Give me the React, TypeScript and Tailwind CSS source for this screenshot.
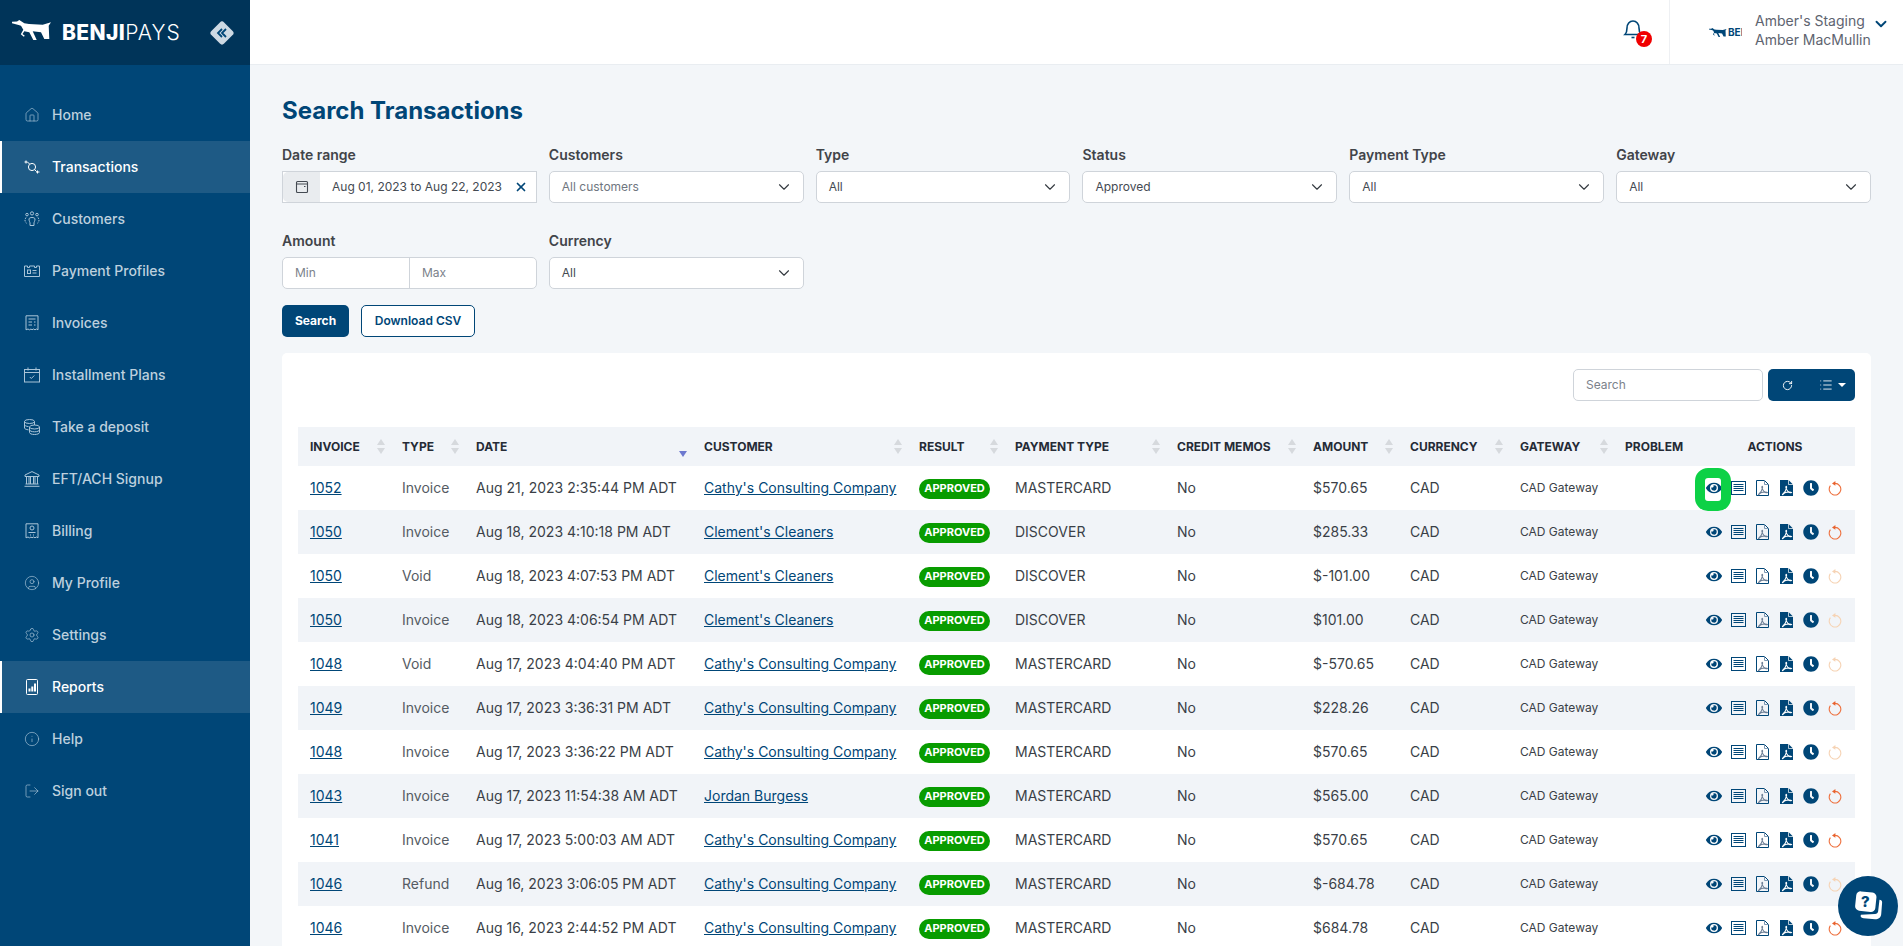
import React from 'react'
import {
    ChevronDown,
    CircleUser,
    House,
    Info,
    List,
    LogOut,
    RotateCw,
    Settings,
    X,
} from 'lucide-react'
import { FaClock, FaEye } from 'react-icons/fa'

const font = { fontFamily: 'Inter, "Noto Sans", sans-serif' }

function Svg({ children }: { children: React.ReactNode }) {
    return (
        <svg width="16" height="16" viewBox="0 0 16 16" fill="none" stroke="currentColor" strokeWidth="1">
            {children}
        </svg>
    )
}

const TransactionsIcon = () => (
    <Svg>
        <circle cx="8" cy="8" r="3.6" />
        <path d="M2 1.500v3M.5 3h3M13.500 11.500v3M12 13h3.500M3.500 3l2 2M10.600 10.600l2 2" />
    </Svg>
)
const CustomersIcon = () => (
    <Svg>
        <circle cx="8" cy="2.400" r="1.600" />
        <circle cx="3" cy="3.600" r="1.300" />
        <circle cx="13" cy="3.600" r="1.300" />
        <path d="M5 8c0-2 6-2 6 0 0 2-1 3-1 4v2.500H6V12c0-1-1-2-1-4z" />
        <path d="M2 6.500c-1.500 2-1.500 4.500 1 6M14 6.500c1.500 2 1.500 4.500-1 6" strokeDasharray="1.500 1" />
    </Svg>
)
const ProfilesIcon = () => (
    <Svg>
        <path d="M.5 3h3v1.500h2V3h5v1.500h2V3h3v10.500H.5z" />
        <rect x="3.500" y="7" width="3" height="3.500" />
        <path d="M8.500 7.500h4M8.500 10h4" />
    </Svg>
)
const InvoicesIcon = () => (
    <Svg>
        <path d="M2 .8h12v14l-1.500-.8-1.500.8-1.500-.8-1.500.8L7 14l-1.500.8L4 14l-2 .8z" />
        <path d="M4.500 4h7M4.500 7h3.500M10 7h1.500M4.500 10h3.500M10 10h1.500" />
    </Svg>
)
const CalendarIcon = () => (
    <Svg>
        <rect x=".5" y="2.500" width="15" height="12.500" />
        <path d="M.5 5.500h15M4 .5v3M12 .5v3M5.800 10l1.500 1.500 3-3" />
    </Svg>
)
const DepositIcon = () => (
    <Svg>
        <ellipse cx="5.500" cy="2.500" rx="5" ry="2" />
        <path d="M.5 2.500v6.500c0 .8 1.500 1.500 4 1.900M.5 5.700c0 .8 1.500 1.600 4 1.900M10.500 2.500V6" />
        <ellipse cx="10.500" cy="8" rx="5" ry="2" />
        <path d="M5.500 8v5.500c0 1.100 2.200 2 5 2s5-.9 5-2V8M5.500 10.800c0 1.100 2.200 2 5 2s5-.9 5-2" />
    </Svg>
)
const BankIcon = () => (
    <Svg>
        <path d="M8 .6 15 4v1.500H1V4z" />
        <path d="M2.500 5.500v7.500M5 5.500v7.500M6.500 5.500v7.500M9.500 5.500v7.500M11 5.500v7.500M13.500 5.500v7.500M1.500 13h13M.5 15.300h15" />
    </Svg>
)
const BillingIcon = () => (
    <Svg>
        <path d="M2 .8h12v14l-1.500-.8-1.500.8-1.500-.8-1.500.8L7 14l-1.500.8L4 14l-2 .8z" />
        <circle cx="8" cy="5" r="2" />
        <path d="M4.500 9.500h7M6 12h1M9 12h1" />
    </Svg>
)
const ReportsIcon = () => (
    <svg width="16" height="16" viewBox="0 0 16 16" fill="currentColor">
        <rect x="2.500" y=".5" width="11" height="15" rx="1" fill="none" stroke="currentColor" />
        <rect x="4.500" y="9.500" width="2" height="3" />
        <rect x="7.300" y="7.500" width="2" height="5" />
        <rect x="10" y="4.500" width="2" height="8" />
    </svg>
)

const icon = { size: 16, strokeWidth: 1 }
const navItems: { label: string; icon: React.ReactNode; active?: boolean }[] = [
    { label: 'Home', icon: <House {...icon} /> },
    { label: 'Transactions', icon: <TransactionsIcon />, active: true },
    { label: 'Customers', icon: <CustomersIcon /> },
    { label: 'Payment Profiles', icon: <ProfilesIcon /> },
    { label: 'Invoices', icon: <InvoicesIcon /> },
    { label: 'Installment Plans', icon: <CalendarIcon /> },
    { label: 'Take a deposit', icon: <DepositIcon /> },
    { label: 'EFT/ACH Signup', icon: <BankIcon /> },
    { label: 'Billing', icon: <BillingIcon /> },
    { label: 'My Profile', icon: <CircleUser {...icon} /> },
    { label: 'Settings', icon: <Settings {...icon} /> },
    { label: 'Reports', icon: <ReportsIcon />, active: true },
    { label: 'Help', icon: <Info {...icon} /> },
    { label: 'Sign out', icon: <LogOut {...icon} /> },
]

function Dog({ className }: { className: string }) {
    return (
        <svg className={className} viewBox="0 0 40 20" fill="currentColor">
            <path d="M0 1.700 5 1.400 7.300 0l5 3.300L17 4l13.700.7L39 2.300l-2.300 3.400.6 13.300h-5L29 12.300l-8.300-1 4 8.700h-3.400l-4-7.700-5 -1-1.800 2.700 2.300 1.700-1 1-3-2.500 2.500-4.500L9 5.700 5.700 4.700 0 3.300z" />
        </svg>
    )
}

function Sidebar() {
    return (
        <aside className="flex w-[250px] shrink-0 flex-col bg-[#004677]">
            <div className="flex h-[65px] items-center bg-[#003459] pl-3">
                <Dog className="mt-[-5px] h-5 w-10 text-white" />
                <span className="ml-[10px] text-[21px] leading-none font-extrabold tracking-[0.4px] text-white">
                    BENJI<span className="font-light tracking-[1px]">PAYS</span>
                </span>
                <span className="mr-[19px] ml-auto flex h-[18px] w-[18px] rotate-45 items-center justify-center rounded-[3px] bg-[#cdd9e3]">
                    <span className="flex -rotate-45 text-[#004677]">
                        <svg width="14" height="14" viewBox="0 0 14 14" fill="none" stroke="currentColor" strokeWidth="1.800">
                            <path d="M7 3 3 7l4 4M11 3 7 7l4 4" />
                        </svg>
                    </span>
                </span>
            </div>
            <nav className="pt-6">
                {navItems.map((item) => (
                    <div
                        key={item.label}
                        className={
                            item.active
                                ? 'flex h-[52px] items-center gap-3 border-l-2 border-white bg-[#1e5a85] pl-[22px] text-sm font-medium text-white'
                                : 'flex h-[52px] items-center gap-3 pl-6 text-sm font-medium text-[#bdd0de]'
                        }
                    >
                        <span className={item.active ? 'text-white' : 'text-[#a9c4d8]'}>{item.icon}</span>
                        {item.label}
                    </div>
                ))}
            </nav>
        </aside>
    )
}

function TopBar() {
    return (
        <header className="flex h-[65px] shrink-0 items-stretch justify-end border-b border-[#e9edf1] bg-white">
            <div className="relative flex w-[86px] items-center justify-start pl-[40px] text-[#004677]">
                <svg width="20" height="22" viewBox="0 0 20 22" fill="none" stroke="currentColor" strokeWidth="1.600" className="mb-[7px]">
                    <path d="M2 16.500c1.500-1.500 2-3 2-6.500 0-4 2.500-7 6-7s6 3 6 7c0 3.500.5 5 2 6.500z" />
                    <path d="M8.500 19.500h3" />
                </svg>
                <span className="absolute top-[31px] left-[53px] flex h-4 w-4 items-center justify-center rounded-full bg-[#f00000] text-[11px] font-bold text-white">
                    7
                </span>
            </div>
            <div className="flex w-[234px] items-center border-l border-[#eef0f3] pl-[38px]">
                <div className="flex w-[34px] items-center overflow-hidden text-[#004677]">
                    <Dog className="h-[9px] w-[20px] shrink-0" />
                    <span className="text-[10px] leading-none font-bold whitespace-nowrap">BEN</span>
                </div>
                <div className="mb-[4px] ml-[13px] text-sm leading-[19px] text-[#5e6470]">
                    <div>Amber's Staging</div>
                    <div>Amber MacMullin</div>
                </div>
                <ChevronDown size={18} strokeWidth={2.500} className="mt-[-16px] ml-[1px] text-[#004677]" />
            </div>
        </header>
    )
}

function Field({ label, children }: { label: string; children: React.ReactNode }) {
    return (
        <div>
            <div className="mb-[6px] h-5 text-sm leading-5 font-semibold text-[#414449]">{label}</div>
            {children}
        </div>
    )
}

function Select({ value, muted }: { value: string; muted?: boolean }) {
    return (
        <div className="flex h-8 items-center justify-between rounded-[5px] border border-[#cfd4da] bg-white pr-[10px] pl-[12px] text-xs">
            <span className={muted ? 'text-[#6f7680]' : 'text-[#444a52]'}>{value}</span>
            <ChevronDown size={18} strokeWidth={1.500} className="text-[#343a40]" />
        </div>
    )
}

function Filters() {
    return (
        <>
            <div className="grid grid-cols-6 gap-x-3 gap-y-7">
                <Field label="Date range">
                    <div className="flex h-8 items-center border border-[#cfd4da] bg-white text-xs">
                        <div className="flex h-full w-[37px] items-center justify-center rounded-l-[5px] bg-[#e9ecef] text-[#444a52]">
                            <svg width="14" height="14" viewBox="0 0 14 14" fill="none" stroke="currentColor" strokeWidth="1.100">
                                <rect x="1.500" y="1.500" width="11" height="11" rx="1" />
                                <path d="M1.500 4h11M9 6.500h1.500" />
                            </svg>
                        </div>
                        <span className="ml-3 text-[#444a52]">Aug 01, 2023 to Aug 22, 2023</span>
                        <X size={14} strokeWidth={3} className="ml-[12px] text-[#004677]" />
                    </div>
                </Field>
                <Field label="Customers">
                    <Select value="All customers" muted />
                </Field>
                <Field label="Type">
                    <Select value="All" />
                </Field>
                <Field label="Status">
                    <Select value="Approved" />
                </Field>
                <Field label="Payment Type">
                    <Select value="All" />
                </Field>
                <Field label="Gateway">
                    <Select value="All" />
                </Field>
                <Field label="Amount">
                    <div className="flex h-8 rounded-[5px] border border-[#cfd4da] bg-white text-xs">
                        <input placeholder="Min" className="w-[127px] border-r border-[#cfd4da] pl-3 placeholder:text-[#7b828b]" />
                        <input placeholder="Max" className="min-w-0 flex-1 pl-3 placeholder:text-[#7b828b]" />
                    </div>
                </Field>
                <Field label="Currency">
                    <Select value="All" />
                </Field>
            </div>
            <div className="mt-4 flex gap-3">
                <button className="h-8 w-[67px] rounded-[5px] bg-[#004677] text-xs font-bold text-white">Search</button>
                <button className="h-8 w-[114px] rounded-[5px] border border-[#004677] bg-white text-xs font-semibold text-[#004677]">
                    Download CSV
                </button>
            </div>
        </>
    )
}

const columns = [
    { label: 'INVOICE', width: 'w-[92px]', sort: true },
    { label: 'TYPE', width: 'w-[74px]', sort: true },
    { label: 'DATE', width: 'w-[228px]', sort: true },
    { label: 'CUSTOMER', width: 'w-[215px]', sort: true },
    { label: 'RESULT', width: 'w-[96px]', sort: true },
    { label: 'PAYMENT TYPE', width: 'w-[162px]', sort: true },
    { label: 'CREDIT MEMOS', width: 'w-[136px]', sort: true },
    { label: 'AMOUNT', width: 'w-[97px]', sort: true },
    { label: 'CURRENCY', width: 'w-[110px]', sort: true },
    { label: 'GATEWAY', width: 'w-[105px]', sort: true },
    { label: 'PROBLEM', width: 'w-[82px]', sort: false },
    { label: 'ACTIONS', width: 'w-[160px]', sort: false },
]

const cathy = "Cathy's Consulting Company"
const clement = "Clement's Cleaners"

const rows = [
    { id: '1052', type: 'Invoice', date: 'Aug 21, 2023 2:35:44 PM ADT', customer: cathy, card: 'MASTERCARD', amount: '$570.65', redo: true },
    { id: '1050', type: 'Invoice', date: 'Aug 18, 2023 4:10:18 PM ADT', customer: clement, card: 'DISCOVER', amount: '$285.33', redo: true },
    { id: '1050', type: 'Void', date: 'Aug 18, 2023 4:07:53 PM ADT', customer: clement, card: 'DISCOVER', amount: '$-101.00', redo: false },
    { id: '1050', type: 'Invoice', date: 'Aug 18, 2023 4:06:54 PM ADT', customer: clement, card: 'DISCOVER', amount: '$101.00', redo: false },
    { id: '1048', type: 'Void', date: 'Aug 17, 2023 4:04:40 PM ADT', customer: cathy, card: 'MASTERCARD', amount: '$-570.65', redo: false },
    { id: '1049', type: 'Invoice', date: 'Aug 17, 2023 3:36:31 PM ADT', customer: cathy, card: 'MASTERCARD', amount: '$228.26', redo: true },
    { id: '1048', type: 'Invoice', date: 'Aug 17, 2023 3:36:22 PM ADT', customer: cathy, card: 'MASTERCARD', amount: '$570.65', redo: false },
    { id: '1043', type: 'Invoice', date: 'Aug 17, 2023 11:54:38 AM ADT', customer: 'Jordan Burgess', card: 'MASTERCARD', amount: '$565.00', redo: true },
    { id: '1041', type: 'Invoice', date: 'Aug 17, 2023 5:00:03 AM ADT', customer: cathy, card: 'MASTERCARD', amount: '$570.65', redo: true },
    { id: '1046', type: 'Refund', date: 'Aug 16, 2023 3:06:05 PM ADT', customer: cathy, card: 'MASTERCARD', amount: '$-684.78', redo: false },
    { id: '1046', type: 'Invoice', date: 'Aug 16, 2023 2:44:52 PM ADT', customer: cathy, card: 'MASTERCARD', amount: '$684.78', redo: true },
]

function SortArrows({ activeDown }: { activeDown?: boolean }) {
    if (activeDown) {
        return (
            <svg width="8" height="14" viewBox="0 0 8 14" className="mt-[6px] fill-[#6d79cf]">
                <path d="M0 8h8l-4 6z" />
            </svg>
        )
    }
    return (
        <svg width="8" height="15" viewBox="0 0 8 15" className="fill-[#d6d9dd]">
            <path d="M4 0l4 6H0zM0 9h8l-4 6z" />
        </svg>
    )
}

const pdfGlyph = 'M2.500 14.500c2-1.500 3.500-4 4-6.500.3-1.500-.2-2.200-.5-1.500-.4 1 .8 3.500 2 5 .8.800 2.800 1.300 3.500 1-.5-.8-4-.7-6 0-1.500.6-2.500 1.500-3 2.500z'

function PdfOutline() {
    return (
        <svg width="13" height="16" viewBox="0 0 13 16" fill="none">
            <path d="M.5.5h8l4 4v11H.5z" stroke="#004677" />
            <path d="M8.500.5v4h4" stroke="#7d98b3" />
            <path d={pdfGlyph} stroke="#6d7f96" strokeWidth="1.100" />
        </svg>
    )
}

function PdfSolid() {
    return (
        <svg width="13" height="16" viewBox="0 0 13 16" fill="none">
            <path d="M0 0h8.500L13 4.500V16H0z" fill="#004677" />
            <path d="M8.500 0v4.500H13" stroke="#fff" strokeWidth=".7" />
            <path d={pdfGlyph} stroke="#fff" strokeWidth="1.100" />
        </svg>
    )
}

function ListDoc() {
    return (
        <svg width="15" height="14" viewBox="0 0 15 14" fill="none" stroke="#004677">
            <rect x=".5" y=".5" width="14" height="13" />
            <path d="M2.500 3.500h10M2.500 5.500h10M2.500 7.500h10M2.500 9.500h10" />
        </svg>
    )
}

function Redo({ enabled }: { enabled: boolean }) {
    const color = enabled ? '#ee6f3c' : '#f6d3b4'
    return (
        <svg width="14" height="16" viewBox="0 0 14 16" fill="none" stroke={color} strokeWidth="1.100">
            <path d="M7 3.400A5.800 5.800 0 1 1 2.400 5.700" />
            <path d="M7.400 1v4.800L4 3.400z" fill={enabled ? '#e8622e' : color} stroke="none" />
        </svg>
    )
}

function Actions({ enabled }: { enabled: boolean }) {
    return (
        <div className="flex h-4 items-center pl-[7px]">
            <span className="flex w-[24px] justify-center">
                <FaEye size={16} className="text-[#004677]" />
            </span>
            <span className="flex w-[25px] justify-center">
                <ListDoc />
            </span>
            <span className="flex w-[23px] justify-center">
                <PdfOutline />
            </span>
            <span className="flex w-[25px] justify-center">
                <PdfSolid />
            </span>
            <span className="flex w-[23px] justify-center">
                <FaClock size={16} className="text-[#004677]" />
            </span>
            <span className="flex w-[26px] justify-center">
                <Redo enabled={enabled} />
            </span>
        </div>
    )
}

function TransactionsTable() {
    return (
        <table className="mt-[26px] w-full table-fixed border-collapse text-sm text-[#3a3f47]">
            <colgroup>
                {columns.map((c) => (
                    <col key={c.label} className={c.width} />
                ))}
            </colgroup>
            <thead>
                <tr className="h-[39px] bg-[#f1f4f8] text-xs font-bold text-[#252b36]">
                    {columns.map((c) => (
                        <th key={c.label} className={c.label === 'ACTIONS' ? 'text-center font-bold' : 'pr-[5px] pl-3 text-left font-bold'}>
                            {c.sort ? (
                                <div className="flex items-center justify-between">
                                    {c.label}
                                    <SortArrows activeDown={c.label === 'DATE'} />
                                </div>
                            ) : (
                                c.label
                            )}
                        </th>
                    ))}
                </tr>
            </thead>
            <tbody>
                {rows.map((r, i) => (
                    <tr key={i} className={i % 2 === 1 ? 'h-[44px] bg-[#f1f4f8]' : 'h-[44px]'}>
                        <td className="pl-3">
                            <a className="text-[#004677] underline">{r.id}</a>
                        </td>
                        <td className="pl-3 text-[#555b63]">{r.type}</td>
                        <td className="pl-3 whitespace-nowrap">{r.date}</td>
                        <td className="pl-3 whitespace-nowrap">
                            <a className="text-[#004677] underline">{r.customer}</a>
                        </td>
                        <td className="pl-3">
                            <span className="inline-flex h-5 w-[71px] items-center justify-center rounded-full bg-[#089c00] text-[11px] font-bold text-white">
                                APPROVED
                            </span>
                        </td>
                        <td className="pl-3">{r.card}</td>
                        <td className="pl-3">No</td>
                        <td className="pl-3">{r.amount}</td>
                        <td className="pl-3">CAD</td>
                        <td className="pl-3 text-xs">CAD Gateway</td>
                        <td />
                        <td className="relative">
                            <Actions enabled={r.redo} />
                            {i === 0 && (
                                <span className="absolute top-[2px] left-0 h-[43px] w-9 rounded-[13px] border-[10px] border-[#0dd146]" />
                            )}
                        </td>
                    </tr>
                ))}
            </tbody>
        </table>
    )
}

function HelpButton() {
    return (
        <div className="fixed right-[5px] bottom-[10px] flex h-[60px] w-[60px] items-center justify-center rounded-full bg-[#004677]">
            <svg width="30" height="30" viewBox="0 0 34 34">
                <path d="M30 10c2 0 3 1 3 3l-1 13c-.3 4-3 6-7 6l-13-1c-3-.3-4-2-3-4l16-1c2 0 3-1 3.500-3z" fill="#fff" />
                <rect x="3" y="1" width="23" height="22" rx="5" fill="#fff" transform="rotate(6 14 12)" />
                <text x="14" y="18" textAnchor="middle" fontSize="17" fontWeight="800" fill="#004677" fontFamily="Inter, sans-serif">
                    ?
                </text>
            </svg>
        </div>
    )
}

export default function App() {
    return (
        <div className="flex h-screen overflow-hidden bg-[#f3f6f9]" style={font}>
            <Sidebar />
            <div className="flex min-w-0 flex-1 flex-col">
                <TopBar />
                <main className="px-8 pt-[30px]">
                    <h1 className="mb-[18px] text-2xl font-bold text-[#004677]">Search Transactions</h1>
                    <Filters />
                    <div className="mt-4 rounded-[5px] bg-white p-4">
                        <div className="flex h-8 justify-end gap-[5px]">
                            <input
                                placeholder="Search"
                                className="w-[190px] rounded-[5px] border border-[#cfd4da] pl-3 text-xs placeholder:text-[#7b828b]"
                            />
                            <div className="flex w-[87px] items-center rounded-[5px] bg-[#004677] pl-[14px] text-white">
                                <RotateCw size={11} strokeWidth={2} />
                                <List size={14} strokeWidth={1.500} className="ml-[26px]" />
                                <span className="ml-[5px] border-x-[4px] border-t-[4px] border-x-transparent border-t-white" />
                            </div>
                        </div>
                        <TransactionsTable />
                    </div>
                </main>
            </div>
            <HelpButton />
        </div>
    )
}
